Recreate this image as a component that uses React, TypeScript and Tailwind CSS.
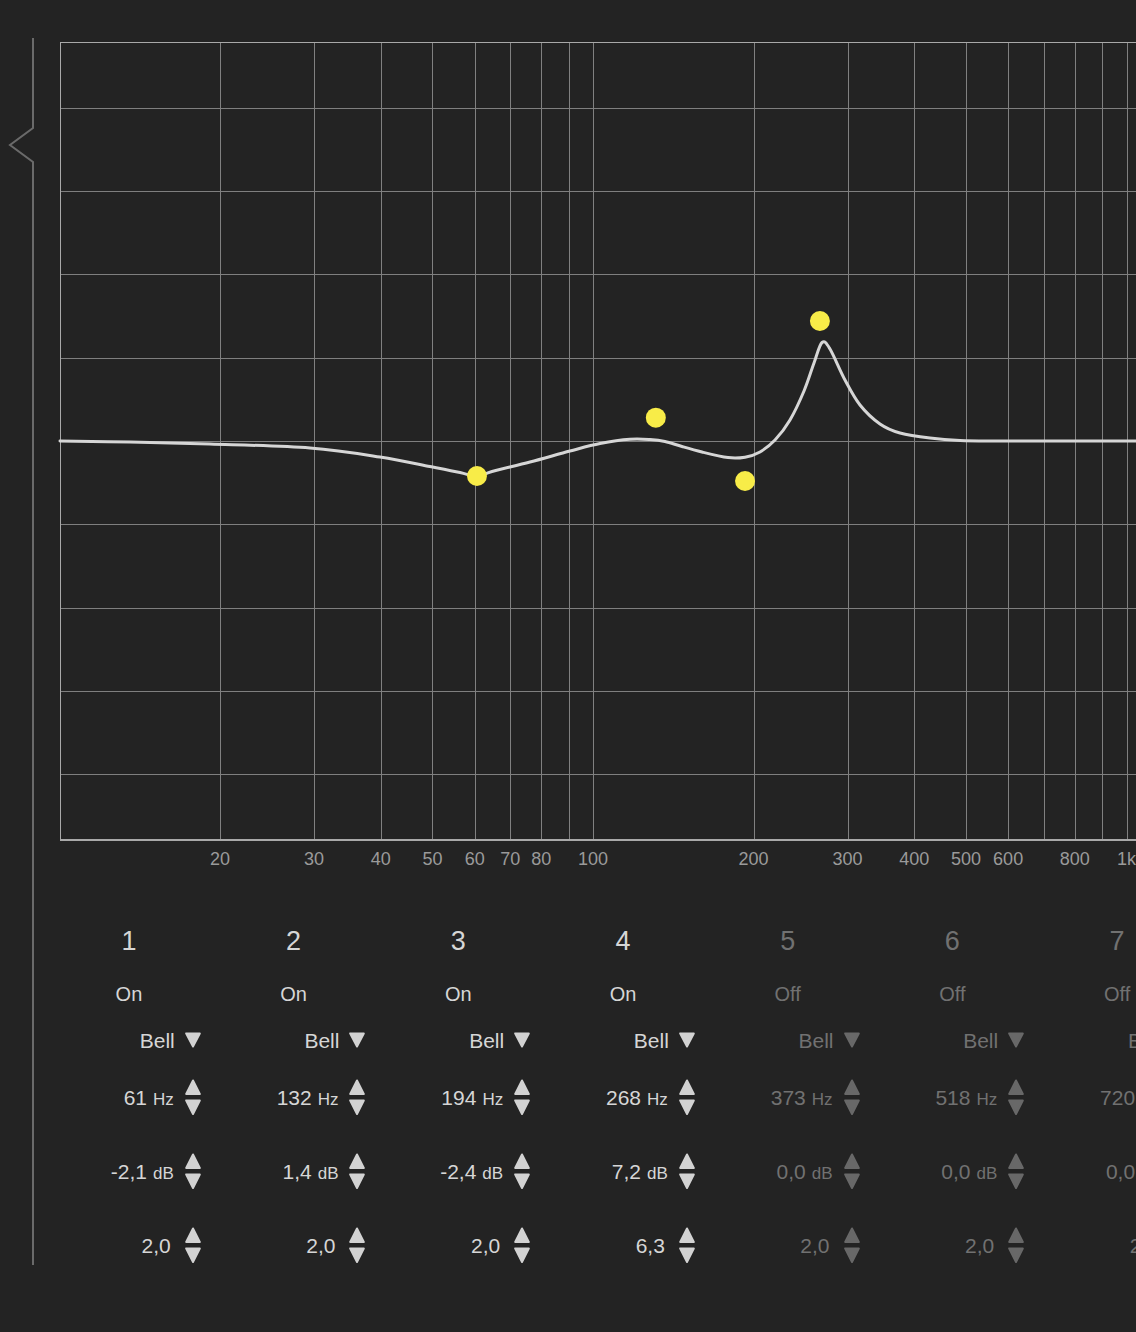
import React from 'react';

// log frequency axis: 10 Hz at the left border, one decade = 533.5px
const X0 = 59.5;
const DECADE = 533.5;
const fx = (f: number) => X0 + DECADE * Math.log10(f / 10);
const gy = (db: number) => 441 - db * (83.33 / 5);

const gridFreqs = [
  20, 30, 40, 50, 60, 70, 80, 90, 100, 200, 300, 400, 500, 600, 700, 800, 900, 1000, 2000,
].filter((f) => fx(f) < 1140);

const axisLabels: [number, string][] = [
  [20, '20'], [30, '30'], [40, '40'], [50, '50'], [60, '60'], [70, '70'], [80, '80'],
  [100, '100'], [200, '200'], [300, '300'], [400, '400'], [500, '500'], [600, '600'],
  [800, '800'], [1000, '1k'],
];

// traced response curve (page coordinates)
const curvePts: [number, number][] = [
  [60, 441], [130, 442], [210, 444], [310, 448], [380, 457], [430, 466.5], [460, 472.5],
  [477, 476.5], [492, 471.5], [530, 462], [570, 451], [600, 443.5], [630, 439.3],
  [650, 439.6], [665, 441.5], [682, 446.5], [702, 452], [728, 457.6], [745, 457.2],
  [760, 452], [775, 440], [790, 420], [804, 391], [814, 363], [822, 342.5], [830, 349],
  [845, 380], [860, 405], [880, 424], [900, 433], [930, 438], [960, 440.5], [1000, 441],
  [1140, 441],
];

function smoothPath(pts: [number, number][]) {
  let d = `M${pts[0][0]} ${pts[0][1]}`;
  for (let i = 0; i < pts.length - 1; i++) {
    const p0 = pts[i - 1] || pts[i];
    const p1 = pts[i];
    const p2 = pts[i + 1];
    const p3 = pts[i + 2] || p2;
    const c1x = p1[0] + (p2[0] - p0[0]) / 6;
    const c1y = p1[1] + (p2[1] - p0[1]) / 6;
    const c2x = p2[0] - (p3[0] - p1[0]) / 6;
    const c2y = p2[1] - (p3[1] - p1[1]) / 6;
    d += ` C${c1x.toFixed(1)} ${c1y.toFixed(1)} ${c2x.toFixed(1)} ${c2y.toFixed(1)} ${p2[0]} ${p2[1]}`;
  }
  return d;
}

type Band = { n: number; on: boolean; freq: number; gain: string; q: string; db: number };

const bands: Band[] = [
  { n: 1, on: true, freq: 61, gain: '-2,1', q: '2,0', db: -2.1 },
  { n: 2, on: true, freq: 132, gain: '1,4', q: '2,0', db: 1.4 },
  { n: 3, on: true, freq: 194, gain: '-2,4', q: '2,0', db: -2.4 },
  { n: 4, on: true, freq: 268, gain: '7,2', q: '6,3', db: 7.2 },
  { n: 5, on: false, freq: 373, gain: '0,0', q: '2,0', db: 0 },
  { n: 6, on: false, freq: 518, gain: '0,0', q: '2,0', db: 0 },
  { n: 7, on: false, freq: 720, gain: '0,0', q: '2,0', db: 0 },
  { n: 8, on: false, freq: 1000, gain: '0,0', q: '2,0', db: 0 },
];

function Spinner({ on }: { on: boolean }) {
  const c = on ? '#d2d2d2' : '#686868';
  return (
    <svg width="16" height="37" viewBox="0 0 16 37" className="shrink-0">
      <path d="M8 1.5 L14.8 15 L1.2 15 Z" fill={c} stroke={c} strokeWidth="2" strokeLinejoin="round" />
      <path d="M1.2 21.5 L14.8 21.5 L8 35 Z" fill={c} stroke={c} strokeWidth="2" strokeLinejoin="round" />
    </svg>
  );
}

function Caret({ on }: { on: boolean }) {
  const c = on ? '#d2d2d2' : '#686868';
  return (
    <svg width="16" height="16" viewBox="0 0 16 16" className="shrink-0">
      <path d="M1.2 1.5 L14.8 1.5 L8 14.5 Z" fill={c} stroke={c} strokeWidth="2" strokeLinejoin="round" />
    </svg>
  );
}

function EqChart() {
  return (
    <svg width="1092" height="842" viewBox="44 38 1092 842" className="block shrink-0">
      <g shapeRendering="crispEdges" strokeWidth="1" fill="none">
        {[-4, -3, -2, -1, 0, 1, 2, 3, 4].map((k) => {
          const y = Math.round(441 + k * 83.33) + 0.5;
          return <line key={k} x1="60" x2="1140" y1={y} y2={y} stroke="#7f7f7f" />;
        })}
        {gridFreqs.map((f) => {
          const x = Math.round(fx(f)) + 0.5;
          return <line key={f} x1={x} x2={x} y1="42" y2="840" stroke="#808080" />;
        })}
        <line x1="60" x2="1140" y1="42.5" y2="42.5" stroke="#a9a9a9" />
        <line x1="60.5" x2="60.5" y1="42" y2="840" stroke="#a9a9a9" />
        <line x1="60" x2="1140" y1="840" y2="840" stroke="#a9a9a9" strokeWidth="2" />
      </g>
      <g fontFamily="'Liberation Sans', Arial, sans-serif" fontSize="18" fill="#9a9a9a" textAnchor="middle">
        {axisLabels.map(([f, t]) => (
          <text key={f} x={fx(f)} y="864.5">
            {t}
          </text>
        ))}
      </g>
      <path
        d={smoothPath(curvePts)}
        fill="none"
        stroke="#d6d6d6"
        strokeWidth="3"
        strokeLinecap="round"
        strokeLinejoin="round"
      />
      {bands
        .filter((b) => b.on)
        .map((b) => (
          <circle key={b.n} cx={fx(b.freq) - 1.5} cy={gy(b.db)} r="10" fill="#f8ec48" />
        ))}
    </svg>
  );
}

function BandColumn({ b }: { b: Band }) {
  const text = b.on ? 'text-[#d6d6d6]' : 'text-[#717171]';
  return (
    <div className={`w-[164.7px] shrink-0 flex flex-col ${text}`}>
      <div className="h-[50px] flex items-center justify-center text-[27px] leading-none">{b.n}</div>
      <div className="h-[56px] flex items-center justify-center text-[20px] leading-none">
        {b.on ? 'On' : 'Off'}
      </div>
      <div className="h-[36px] flex items-center justify-end gap-[10px] pr-[10.5px] text-[21px] leading-none">
        <span>Bell</span>
        <Caret on={b.on} />
      </div>
      <div className="h-[78px] flex items-center justify-end gap-[11px] pr-[10.5px] leading-none">
        <span className="text-[21px]">
          {b.freq}
          <span className="ml-[6px] text-[17px]">Hz</span>
        </span>
        <Spinner on={b.on} />
      </div>
      <div className="h-[70px] flex items-center justify-end gap-[11px] pr-[10.5px] leading-none">
        <span className="text-[21px]">
          {b.gain}
          <span className="ml-[6px] text-[17px]">dB</span>
        </span>
        <Spinner on={b.on} />
      </div>
      <div className="h-[78px] flex items-center justify-end gap-[14px] pr-[10.5px] leading-none">
        <span className="text-[21px]">{b.q}</span>
        <Spinner on={b.on} />
      </div>
    </div>
  );
}

export default function App() {
  return (
    <div className="w-[1136px] h-[1332px] overflow-hidden bg-[#232323] flex font-['Liberation_Sans',Arial,sans-serif]">
      <svg width="44" height="1280" viewBox="0 0 44 1280" className="block shrink-0">
        <path d="M33 38 V128 L10 145 L33 162 V1265" fill="none" stroke="#6a6a6a" strokeWidth="2" />
      </svg>
      <div className="flex flex-col pt-[38px] min-w-0">
        <EqChart />
        <div className="mt-[36px] pl-[2.6px] flex">
          {bands.map((b) => (
            <BandColumn key={b.n} b={b} />
          ))}
        </div>
      </div>
    </div>
  );
}
